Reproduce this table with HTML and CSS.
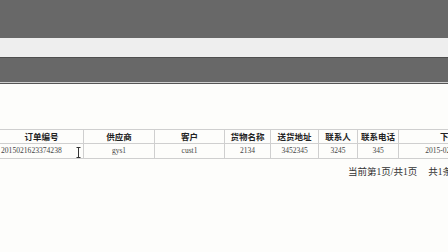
FILE: index.html
```html
<!DOCTYPE html>
<html lang="zh">
<head>
<meta charset="utf-8">
<title>订单列表</title>
<link rel="stylesheet" href="styles.css">
</head>
<body>
<div class="topbar"></div>
<div class="navband"></div>
<div class="toolbar"></div>
<main class="content">
  <table class="grid">
    <thead>
      <tr>
        <th class="c1">订单编号</th>
        <th class="c2">供应商</th>
        <th class="c3">客户</th>
        <th class="c4">货物名称</th>
        <th class="c5">送货地址</th>
        <th class="c6">联系人</th>
        <th class="c7">联系电话</th>
        <th class="c8">下单时间</th>
      </tr>
    </thead>
    <tbody>
      <tr>
        <td class="order">2015021623374238<span class="ibeam"><svg width="5" height="11" viewBox="0 0 5 11"><path d="M0.5 0.5H4.5M2.5 0.5V10.5M0.5 10.5H4.5" stroke="#333" stroke-width="1" fill="none"/></svg></span></td>
        <td>gys1</td>
        <td>cust1</td>
        <td>2134</td>
        <td>3452345</td>
        <td>3245</td>
        <td>345</td>
        <td>2015-02-16 23:37:42</td>
      </tr>
    </tbody>
  </table>
  <div class="pager"><span>当前第1页/共1页</span><span>共1条记录</span></div>
</main>
</body>
</html>
```

FILE: styles.css
```css
html, body {
  margin: 0;
  padding: 0;
  overflow: hidden;
  width: 448px;
  height: 252px;
  background: #fdfdfb;
  font-family: "Liberation Serif", "Noto Sans CJK SC", serif;
  color: #333;
}
.topbar {
  height: 38px;
  background: #686868;
}
.navband {
  height: 19px;
  background: #eeeeee;
  border-bottom: 1px solid #4e4e4e;
}
.toolbar {
  height: 24px;
  background: #686868;
  border-bottom: 1px solid #cfcfcf;
  box-shadow: 0 1px 0 #555;
}
.content {
  padding-top: 46px;
  width: 600px;
}
.grid {
  border-collapse: collapse;
  table-layout: fixed;
  width: 514px;
}
.grid th, .grid td {
  border: 1px solid #cfcfcf;
  padding: 0;
  text-align: center;
  white-space: nowrap;
  overflow: visible;
}
.grid th {
  height: 13px;
  font-family: "Noto Sans CJK SC", sans-serif;
  font-size: 8.5px;
  font-weight: bold;
  color: #222;
  line-height: 13px;
}
.grid td {
  height: 14px;
  font-size: 7.5px;
  line-height: 14px;
  color: #444;
}
.grid tr > :first-child { border-left: none; }
.c1 { width: 83px; }
.c2 { width: 70px; }
.c3 { width: 69px; }
.c4 { width: 45px; }
.c5 { width: 47px; }
.c6 { width: 38px; }
.c7 { width: 40px; }
.c8 { width: 116px; }
.grid td.order {
  text-align: left;
  padding-left: 1px;
  font-size: 7.6px;
  position: relative;
}
.ibeam {
  position: absolute;
  left: 76px;
  top: 3px;
  line-height: 0;
}
.pager {
  display: flex;
  gap: 11px;
  padding-left: 348px;
  margin-top: 7px;
  font-family: "Liberation Serif", "Noto Sans CJK SC", sans-serif;
  font-size: 9.5px;
  line-height: 12px;
  color: #333;
  white-space: nowrap;
}
```
